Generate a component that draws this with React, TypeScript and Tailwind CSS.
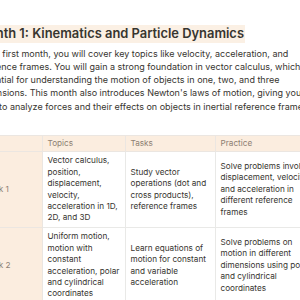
import React from "react";

const rows = [
  {
    week: "Week 1",
    topics: "Vector calculus, position, displacement, velocity, acceleration in 1D, 2D, and 3D",
    tasks: "Study vector operations (dot and cross products), reference frames",
    practice: ["Solve problems involving", "displacement, velocity,", "and acceleration in", "different reference", "frames"],
  },
  {
    week: "Week 2",
    topics: "Uniform motion, motion with constant acceleration, polar and cylindrical coordinates",
    tasks: "Learn equations of motion for constant and variable acceleration",
    practice: ["Solve problems on", "motion in different", "dimensions using polar", "and cylindrical", "coordinates"],
  },
];

export default function App() {
  return (
    <div className="w-[300px] h-[300px] overflow-hidden bg-white">
      <div
        className="ml-[-24px] w-[420px] pt-[25px] text-[#37352f]"
        style={{ fontFamily: "Inter, 'Noto Sans', sans-serif" }}
      >
        <h2 className="text-[12.9px] font-semibold leading-[18px]">
          <span className="inline-block bg-[#fbf0e4] pr-[1px]">Month 1: Kinematics and Particle Dynamics</span>
        </h2>
        <p className="mt-[3.5px] w-[350px] text-[9px] leading-[13.3px]">
          In the first month, you will cover key topics like velocity, acceleration, and reference frames. You will gain a strong foundation in vector calculus, which is essential for understanding the motion of objects in one, two, and three dimensions. This month also introduces Newton's laws of motion, giving you the tools to analyze forces and their effects on objects in inertial reference frames.
        </p>
        <table className="mt-[22px] border-collapse text-[8.2px] leading-[11.4px] table-fixed">
          <colgroup>
            <col className="w-[66px]" />
            <col className="w-[83px]" />
            <col className="w-[90px]" />
            <col className="w-[115px]" />
          </colgroup>
          <thead>
            <tr className="h-[16px] bg-[#fbeddf] text-[#8d7f73]">
              <th className="border border-[#ebe6e1] px-[4.5px] py-0 text-left font-normal"></th>
              <th className="border border-[#ebe6e1] px-[4.5px] py-0 text-left font-normal">Topics</th>
              <th className="border border-[#ebe6e1] px-[4.5px] py-0 text-left font-normal">Tasks</th>
              <th className="border border-[#ebe6e1] px-[4.5px] py-0 text-left font-normal">Practice</th>
            </tr>
          </thead>
          <tbody>
            {rows.map((r) => (
              <tr key={r.week}>
                <td className="border border-[#ebe6e1] bg-[#fbeddf] px-[4.5px] py-[3.3px] align-middle text-[#8d7f73]">
                  {r.week}
                </td>
                <td className="border border-[#e9e9e7] px-[4.5px] py-[3.3px] align-middle">{r.topics}</td>
                <td className="border border-[#e9e9e7] px-[4.5px] py-[3.3px] align-middle">{r.tasks}</td>
                <td className="border border-[#e9e9e7] px-[4.5px] py-[3.3px] align-middle">
                  {r.practice.map((line) => (
                    <div key={line} className="whitespace-nowrap">
                      {line}
                    </div>
                  ))}
                </td>
              </tr>
            ))}
          </tbody>
        </table>
      </div>
    </div>
  );
}
